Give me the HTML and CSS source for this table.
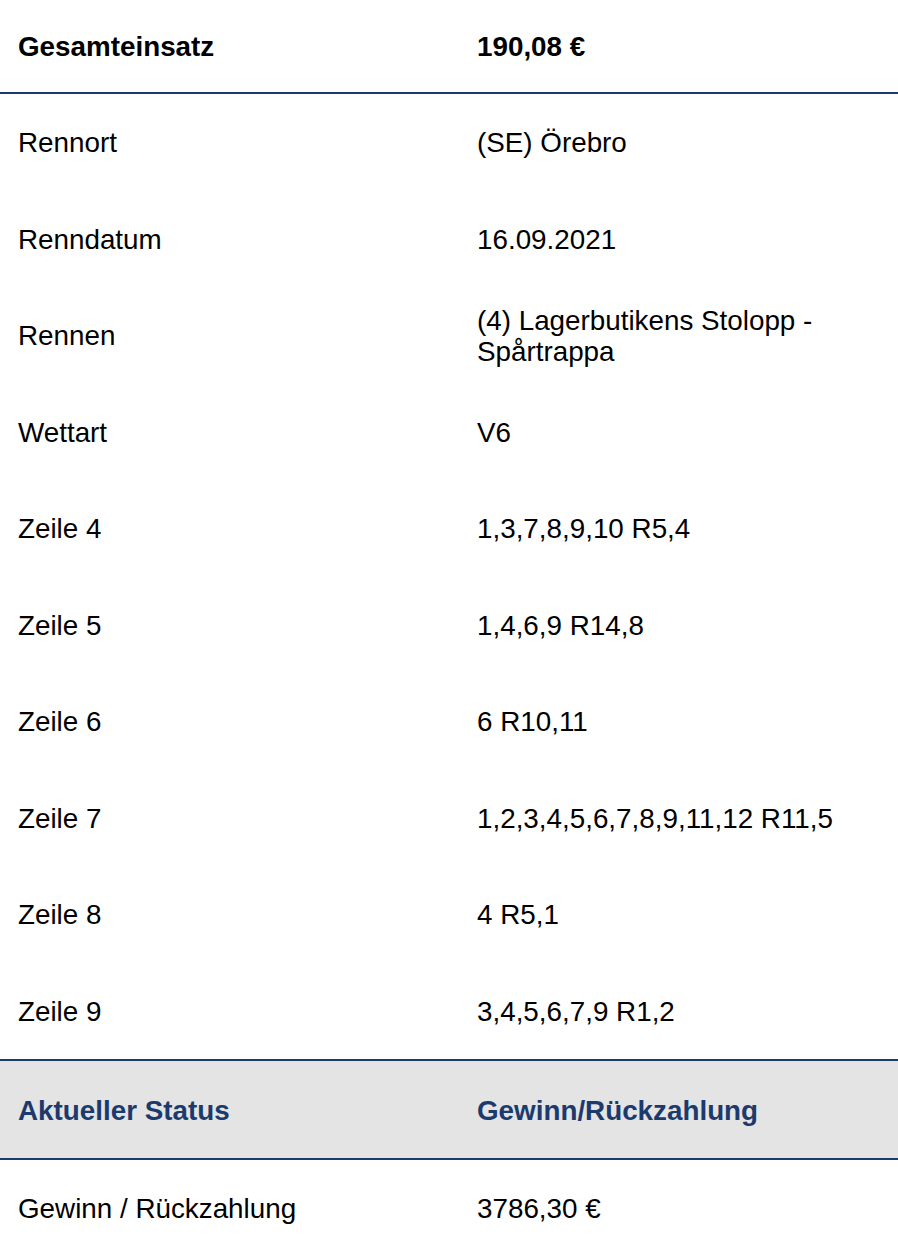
FILE: index.html
```html
<!DOCTYPE html>
<html lang="de">
<head>
<meta charset="utf-8">
<link rel="stylesheet" href="styles.css">
</head>
<body>
<div class="sheet">
  <div class="row head">
    <div class="cell">Gesamteinsatz</div>
    <div class="cell">190,08 €</div>
  </div>
  <div class="row"><div class="cell">Rennort</div><div class="cell">(SE) Örebro</div></div>
  <div class="row"><div class="cell">Renndatum</div><div class="cell">16.09.2021</div></div>
  <div class="row"><div class="cell">Rennen</div><div class="cell">(4) Lagerbutikens Stolopp - Spårtrappa</div></div>
  <div class="row"><div class="cell">Wettart</div><div class="cell">V6</div></div>
  <div class="row"><div class="cell">Zeile 4</div><div class="cell">1,3,7,8,9,10 R5,4</div></div>
  <div class="row"><div class="cell">Zeile 5</div><div class="cell">1,4,6,9 R14,8</div></div>
  <div class="row"><div class="cell">Zeile 6</div><div class="cell">6 R10,11</div></div>
  <div class="row"><div class="cell">Zeile 7</div><div class="cell">1,2,3,4,5,6,7,8,9,11,12 R11,5</div></div>
  <div class="row"><div class="cell">Zeile 8</div><div class="cell">4 R5,1</div></div>
  <div class="row"><div class="cell">Zeile 9</div><div class="cell">3,4,5,6,7,9 R1,2</div></div>
  <div class="row status">
    <div class="cell">Aktueller Status</div>
    <div class="cell">Gewinn/Rückzahlung</div>
  </div>
  <div class="row"><div class="cell">Gewinn / Rückzahlung</div><div class="cell">3786,30 €</div></div>
</div>
</body>
</html>
```

FILE: styles.css
```css
html, body {
  margin: 0;
  padding: 0;
  background: #ffffff;
}
body {
  font-family: "Liberation Sans", Arial, Helvetica, sans-serif;
  font-size: 27.8px;
  line-height: 31px;
  color: #000000;
}
.sheet {
  width: 898px;
}
.row {
  display: grid;
  grid-template-columns: 459px 1fr;
  align-items: center;
  height: 96.5px;
  padding-top: 1px;
  box-sizing: border-box;
}
.cell {
  padding: 0 18px;
}
.head {
  height: 94px;
  padding-top: 0;
  font-weight: bold;
  border-bottom: 2px solid #1b3a6d;
}
.status {
  height: 101px;
  background: #e4e4e4;
  color: #1b3a6d;
  font-weight: bold;
  border-top: 2px solid #1b3a6d;
  border-bottom: 2px solid #1b3a6d;
}
```
